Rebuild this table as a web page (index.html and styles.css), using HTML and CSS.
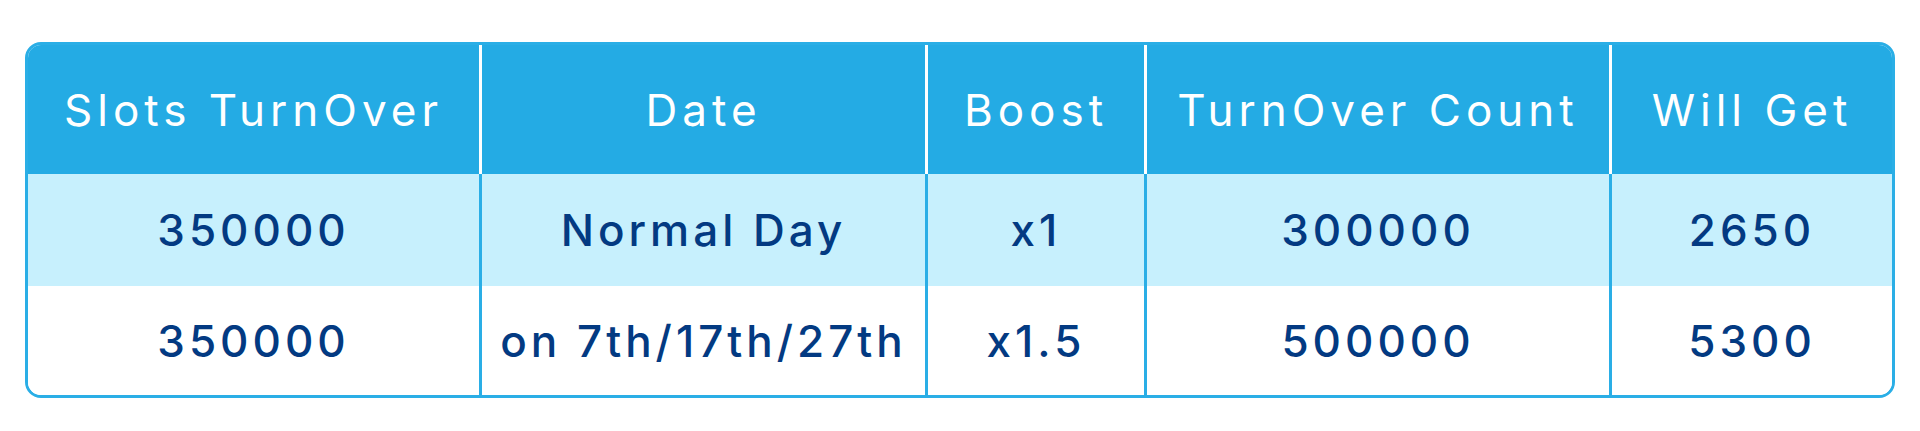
FILE: index.html
```html
<!DOCTYPE html>
<html lang="en">
<head>
<meta charset="utf-8">
<title>Slots TurnOver</title>
<link rel="stylesheet" href="styles.css">
</head>
<body>
<div class="page">
  <div class="table">
    <div class="row head">
      <div class="cell c1">Slots TurnOver</div>
      <div class="cell c2">Date</div>
      <div class="cell c3">Boost</div>
      <div class="cell c4">TurnOver Count</div>
      <div class="cell c5">Will Get</div>
    </div>
    <div class="row body alt">
      <div class="cell c1">350000</div>
      <div class="cell c2">Normal Day</div>
      <div class="cell c3">x1</div>
      <div class="cell c4">300000</div>
      <div class="cell c5">2650</div>
    </div>
    <div class="row body last">
      <div class="cell c1">350000</div>
      <div class="cell c2">on 7th/17th/27th</div>
      <div class="cell c3">x1.5</div>
      <div class="cell c4">500000</div>
      <div class="cell c5">5300</div>
    </div>
  </div>
</div>
</body>
</html>
```
FILE: styles.css
```css
html, body {
  margin: 0;
  padding: 0;
  background: #ffffff;
}
.page {
  padding: 42px 0 0 25px;
}
.table {
  width: 1870px;
  box-sizing: border-box;
  border: 3px solid #2aaee6;
  border-radius: 16px;
  overflow: hidden;
  font-family: "Inter", "Liberation Sans", sans-serif;
}
.row {
  display: grid;
  grid-template-columns: 451px 446px 219px 465px 283px;
}
.cell {
  display: flex;
  align-items: center;
  justify-content: center;
  white-space: nowrap;
}
.cell + .cell {
  border-left: 3px solid #2aaee6;
}
.head {
  height: 129px;
  background: #24abe4;
  color: #ffffff;
  font-size: 44px;
  font-weight: 400;
  letter-spacing: 5px;
}
.head .cell + .cell {
  border-left-color: #ffffff;
}
.body {
  color: #033a82;
  font-size: 44px;
  font-weight: 500;
  letter-spacing: 4px;
}
.alt {
  height: 112px;
  background: #c7f0fd;
}
.last {
  height: 109px;
  background: #ffffff;
}
```
